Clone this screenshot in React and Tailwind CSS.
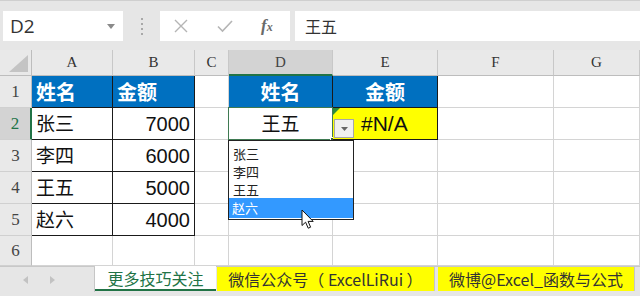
import React from "react";

const CJK = { fontFamily: '"Noto Sans CJK SC", "Noto Sans", sans-serif' };
const SERIF = { fontFamily: '"Liberation Serif", "DejaVu Serif", serif' };
const SANS = { fontFamily: '"Liberation Sans", Arial, sans-serif' };

const G = "border-r border-b border-[#d4d4d4]";

function ColHdr({ children, sel }) {
  return (
    <div
      className={
        "flex items-center justify-center text-[15px] border-r border-[#c8c8c8] " +
        (sel
          ? "bg-[#d3d3d3] text-[#444] border-b-2 border-b-[#217346]"
          : "bg-[#e9e9e9] text-[#333] border-b border-b-[#bdbdbd]")
      }
      style={SERIF}
    >
      {children}
    </div>
  );
}

function RowHdr({ children, sel }) {
  return (
    <div
      className={
        "flex items-center justify-center text-[17px] border-b border-[#d0d0d0] " +
        (sel
          ? "bg-[#d3d3d3] text-[#217346] border-r-2 border-r-[#217346]"
          : "bg-[#e9e9e9] text-[#444] border-r border-r-[#bdbdbd]")
      }
      style={SERIF}
    >
      {children}
    </div>
  );
}

export default function App() {
  return (
    <div className="w-[640px] h-[296px] bg-[#e6e6e6] overflow-hidden relative select-none">
      {/* formula bar */}
      <div className="h-[50px] flex items-start pt-[10px] pl-[3px] border-t border-[#cfcfcf]">
        <div className="w-[120px] h-[30px] bg-white flex items-center justify-between pl-[7px] pr-[8px]">
          <span className="text-[19px] text-[#333]" style={{ fontFamily: '"Open Sans", sans-serif' }}>D2</span>
          <svg width="8" height="5" viewBox="0 0 8 5"><path d="M0 0h8L4 5z" fill="#8a8a8a" /></svg>
        </div>
        <div className="w-[37px] h-[30px] flex flex-col items-center justify-center gap-[3px]">
          <div className="w-[2px] h-[2px] bg-[#a8a8a8]" />
          <div className="w-[2px] h-[2px] bg-[#a8a8a8]" />
          <div className="w-[2px] h-[2px] bg-[#a8a8a8]" />
          <div className="w-[2px] h-[2px] bg-[#a8a8a8]" />
        </div>
        <div className="w-[130px] h-[30px] bg-white flex items-center">
          <svg className="ml-[13px]" width="16" height="16" viewBox="0 0 16 16"><path d="M2 2L14 14M14 2L2 14" stroke="#b5b5b5" strokeWidth="1.4" /></svg>
          <svg className="ml-[27px]" width="18" height="16" viewBox="0 0 18 16"><path d="M2 8.5L6.5 13L16 3" stroke="#b5b5b5" strokeWidth="1.6" fill="none" /></svg>
          <span className="ml-[27px] text-[17px] italic text-[#6a6a6a] font-bold" style={SERIF}>f<span className="text-[12px]">x</span></span>
        </div>
        <div className="ml-[5px] flex-1 h-[30px] bg-white flex items-center pl-[10px]">
          <span className="text-[16px] text-[#333]" style={CJK}>王五</span>
        </div>
      </div>

      {/* sheet */}
      <div className="relative bg-white">
        <div className="grid grid-cols-[32px_81px_82px_34px_104px_105px_116px_86px] grid-rows-[26px_32px_32px_32px_32px_32px_30px]">
          {/* header row */}
          <div className="bg-[#e9e9e9] border-r border-b border-[#bdbdbd] relative">
            <svg className="absolute right-[3px] bottom-[3px]" width="19" height="17" viewBox="0 0 19 17"><path d="M19 0V17H0z" fill="#c4c4c4" /></svg>
          </div>
          <ColHdr>A</ColHdr>
          <ColHdr>B</ColHdr>
          <ColHdr>C</ColHdr>
          <ColHdr sel>D</ColHdr>
          <ColHdr>E</ColHdr>
          <ColHdr>F</ColHdr>
          <ColHdr>G</ColHdr>

          {/* row 1 */}
          <RowHdr>1</RowHdr>
          <div className="bg-[#0070c0] border-r border-b border-[#1a1a1a] flex items-center pl-[4px] text-white font-bold text-[20px]" style={CJK}>姓名</div>
          <div className="bg-[#0070c0] border-r border-b border-[#1a1a1a] flex items-center pl-[4px] text-white font-bold text-[20px]" style={CJK}>金额</div>
          <div className={G} />
          <div className="bg-[#0070c0] border-r border-b border-[#1a1a1a] flex items-center justify-center text-white font-bold text-[20px]" style={CJK}>姓名</div>
          <div className="bg-[#0070c0] border-r border-b border-[#1a1a1a] flex items-center justify-center text-white font-bold text-[20px]" style={CJK}>金额</div>
          <div className={G} />
          <div className={G} />

          {/* row 2 */}
          <RowHdr sel>2</RowHdr>
          <div className="border-r border-b border-[#1a1a1a] flex items-center pl-[4px] text-[19px] text-[#111]" style={CJK}>张三</div>
          <div className="border-r border-b border-[#1a1a1a] flex items-center justify-end pr-[4px] text-[20px] text-[#111]" style={SANS}>7000</div>
          <div className={G} />
          <div className="relative border-r border-b border-[#1a1a1a] flex items-center justify-center text-[19px] text-[#111]" style={CJK}>
            王五
            <div className="absolute -left-px -top-px right-[-1px] bottom-[-1px] border border-[#3f7a52]" />
            <div className="absolute right-[-4px] bottom-[-4px] w-[6px] h-[6px] bg-[#2f5f3f] border border-white" />
          </div>
          <div className="relative bg-[#ffff00] border-r border-b border-[#1a1a1a] flex items-center pl-[28px] text-[21px] text-[#111]" style={SANS}>
            #N/A
            <svg className="absolute left-0 top-0" width="7" height="7" viewBox="0 0 7 7"><path d="M0 0H7L0 7z" fill="#2e8b3a" /></svg>
          </div>
          <div className={G} />
          <div className={G} />

          {/* rows 3-5 */}
          {[
            ["3", "李四", "6000"],
            ["4", "王五", "5000"],
            ["5", "赵六", "4000"],
          ].map(([r, n, v]) => (
            <React.Fragment key={r}>
              <RowHdr>{r}</RowHdr>
              <div className="border-r border-b border-[#1a1a1a] flex items-center pl-[4px] text-[19px] text-[#111]" style={CJK}>{n}</div>
              <div className="border-r border-b border-[#1a1a1a] flex items-center justify-end pr-[4px] text-[20px] text-[#111]" style={SANS}>{v}</div>
              <div className={G} />
              <div className={G} />
              <div className={G} />
              <div className={G} />
              <div className={G} />
            </React.Fragment>
          ))}

          {/* row 6 */}
          <RowHdr>6</RowHdr>
          <div className={G} />
          <div className={G} />
          <div className={G} />
          <div className={G} />
          <div className={G} />
          <div className={G} />
          <div className={G} />
        </div>

        {/* dropdown button */}
        <div className="absolute left-[334px] top-[69px] w-[20px] h-[19px] bg-[#f0f0f0] border border-[#a8a8a8] flex items-center justify-center">
          <svg width="7" height="4" viewBox="0 0 7 4"><path d="M0 0h7L3.5 4z" fill="#666" /></svg>
        </div>

        {/* dropdown list */}
        <div className="absolute left-[228px] top-[90px] w-[126px] h-[80px] bg-white border border-[#222] pt-[4px] text-[13px] text-[#222]" style={CJK}>
          <div className="pl-[4px] h-[18px] flex items-center overflow-hidden">张三</div>
          <div className="pl-[4px] h-[18px] flex items-center overflow-hidden">李四</div>
          <div className="pl-[4px] h-[17px] flex items-center overflow-hidden">王五</div>
          <div className="pl-[3px] bg-[#3399ff] text-white h-[20px] flex items-center overflow-hidden">赵六</div>
        </div>

        {/* cursor */}
        <svg className="absolute left-[301px] top-[159px]" width="14" height="21" viewBox="0 0 14 21">
          <path d="M1 1V16.5L4.6 13.2L7.2 19.2L9.6 18.2L7.1 12.4H12.2Z" fill="white" stroke="#111" strokeWidth="1" strokeLinejoin="round" />
        </svg>
      </div>

      {/* tab bar */}
      <div className="h-[30px] bg-[#e6e6e6] border-t border-[#c8c8c8] flex items-start">
        <div className="w-[95px] h-[25px] flex items-center border-r border-[#c6c6c6]">
          <svg className="ml-[23px]" width="5" height="8" viewBox="0 0 5 8"><path d="M5 0V8L0 4z" fill="#c2c2c2" /></svg>
          <svg className="ml-[22px]" width="5" height="8" viewBox="0 0 5 8"><path d="M0 0V8L5 4z" fill="#c2c2c2" /></svg>
        </div>
        <div className="w-[121px] h-[25px] bg-white border-b-2 border-[#217346] flex items-center justify-center text-[16px] text-[#217346] -mt-px" style={CJK}>更多技巧关注</div>
        <div className="w-[218px] h-[24px] bg-[#ffff00] ml-px flex items-center justify-center text-[16px] text-[#333] border-r border-[#c6c6c6]" style={CJK}>微信公众号（ ExcelLiRui ）</div>
        <div className="w-[3px]" />
        <div className="w-[197px] h-[24px] bg-[#ffff00] flex items-center justify-center text-[16px] text-[#333] border-r border-[#c6c6c6]" style={CJK}>微博@Excel_函数与公式</div>
      </div>
    </div>
  );
}
